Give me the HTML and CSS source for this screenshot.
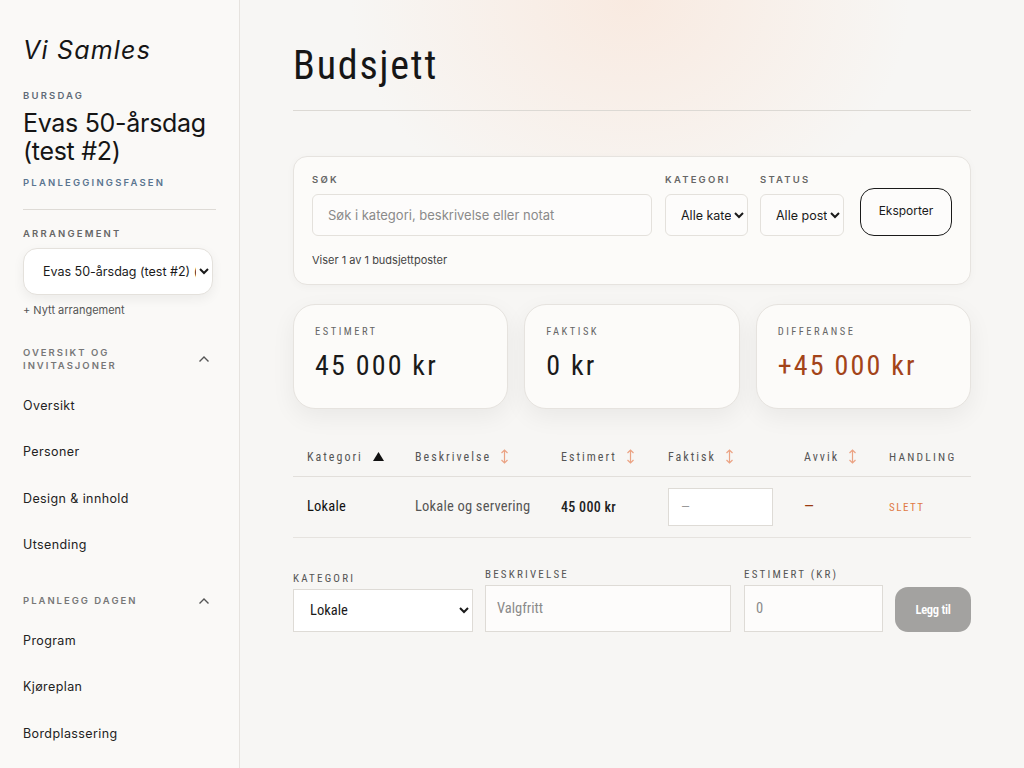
FILE: index.html
```html
<!DOCTYPE html>
<html lang="no">
<head>
<meta charset="utf-8">
<title>Budsjett – Vi Samles</title>
<link rel="stylesheet" href="styles.css">
</head>
<body>
<aside class="sidebar">
  <div class="brand">Vi Samles</div>
  <div class="event-type">BURSDAG</div>
  <div class="event-name">Evas 50-årsdag (test #2)</div>
  <div class="event-phase">PLANLEGGINGSFASEN</div>
  <div class="divider"></div>
  <div class="side-label">ARRANGEMENT</div>
  <select class="event-select"><option>Evas 50-årsdag (test #2) (bursdag)</option></select>
  <div class="new-event">+ Nytt arrangement</div>

  <div class="group-head">
    <span>OVERSIKT OG<br>INVITASJONER</span>
    <svg class="chev" width="12" height="8" viewBox="0 0 12 8"><path d="M1.5 6.5 6 2l4.5 4.5" fill="none" stroke="#555" stroke-width="1.4"/></svg>
  </div>
  <nav class="nav">
    <a>Oversikt</a>
    <a>Personer</a>
    <a>Design &amp; innhold</a>
    <a>Utsending</a>
  </nav>
  <div class="group-head group-two">
    <span>PLANLEGG DAGEN</span>
    <svg class="chev" width="12" height="8" viewBox="0 0 12 8"><path d="M1.5 6.5 6 2l4.5 4.5" fill="none" stroke="#555" stroke-width="1.4"/></svg>
  </div>
  <nav class="nav">
    <a>Program</a>
    <a>Kjøreplan</a>
    <a>Bordplassering</a>
  </nav>
</aside>

<main class="main">
  <h1 class="title">Budsjett</h1>
  <div class="rule"></div>

  <section class="filter-card">
    <div class="filter-row">
      <div class="field field-search">
        <label class="lbl">SØK</label>
        <input class="input" type="text" placeholder="Søk i kategori, beskrivelse eller notat">
      </div>
      <div class="field field-kat">
        <label class="lbl">KATEGORI</label>
        <select class="input sel"><option>Alle kategorier</option></select>
      </div>
      <div class="field field-status">
        <label class="lbl">STATUS</label>
        <select class="input sel"><option>Alle poster</option></select>
      </div>
      <button class="btn-export">Eksporter</button>
    </div>
    <div class="count">Viser 1 av 1 budsjettposter</div>
  </section>

  <section class="stats">
    <div class="stat">
      <div class="stat-label">ESTIMERT</div>
      <div class="stat-value">45 000 kr</div>
    </div>
    <div class="stat">
      <div class="stat-label">FAKTISK</div>
      <div class="stat-value">0 kr</div>
    </div>
    <div class="stat">
      <div class="stat-label">DIFFERANSE</div>
      <div class="stat-value diff">+45 000 kr</div>
    </div>
  </section>

  <table class="table">
    <colgroup>
      <col class="w1"><col class="w2"><col class="w3"><col class="w4"><col class="w5"><col class="w6">
    </colgroup>
    <thead>
      <tr>
        <th class="first">Kategori <svg class="sort-on" width="11" height="9" viewBox="0 0 11 9"><path d="M5.5 0 11 9H0z" fill="#111"/></svg></th>
        <th>Beskrivelse <svg class="sort" width="9" height="15" viewBox="0 0 9 15"><path d="M4.5 1v13M1.5 4 4.5 1l3 3M1.5 11l3 3 3-3" fill="none" stroke="#eba383" stroke-width="1.2"/></svg></th>
        <th>Estimert <svg class="sort" width="9" height="15" viewBox="0 0 9 15"><path d="M4.5 1v13M1.5 4 4.5 1l3 3M1.5 11l3 3 3-3" fill="none" stroke="#eba383" stroke-width="1.2"/></svg></th>
        <th>Faktisk <svg class="sort" width="9" height="15" viewBox="0 0 9 15"><path d="M4.5 1v13M1.5 4 4.5 1l3 3M1.5 11l3 3 3-3" fill="none" stroke="#eba383" stroke-width="1.2"/></svg></th>
        <th>Avvik <svg class="sort" width="9" height="15" viewBox="0 0 9 15"><path d="M4.5 1v13M1.5 4 4.5 1l3 3M1.5 11l3 3 3-3" fill="none" stroke="#eba383" stroke-width="1.2"/></svg></th>
        <th class="caps">HANDLING</th>
      </tr>
    </thead>
    <tbody>
      <tr>
        <td class="first strong">Lokale</td>
        <td class="muted">Lokale og servering</td>
        <td class="amount">45 000 kr</td>
        <td><input class="cell-input" type="text" placeholder="—"></td>
        <td class="dash">—</td>
        <td><span class="delete">SLETT</span></td>
      </tr>
    </tbody>
  </table>

  <section class="add-row">
    <div class="add-field add-kat">
      <label class="lbl lbl-c">KATEGORI</label>
      <select class="add-input add-sel"><option>Lokale</option></select>
    </div>
    <div class="add-field add-desc">
      <label class="lbl lbl-c">BESKRIVELSE</label>
      <input class="add-input" type="text" placeholder="Valgfritt">
    </div>
    <div class="add-field add-est">
      <label class="lbl lbl-c">ESTIMERT (KR)</label>
      <input class="add-input" type="text" placeholder="0">
    </div>
    <button class="btn-add">Legg til</button>
  </section>
</main>
</body>
</html>
```

FILE: styles.css
```css
* { box-sizing: border-box; }
html, body { margin: 0; height: 100%; }
body {
  display: flex;
  width: 1024px;
  height: 768px;
  overflow: hidden;
  font-family: "Inter", "Roboto", sans-serif;
  color: #1a1a1a;
  background-color: #f7f6f4;
  background-image: radial-gradient(ellipse 280px 230px at 630px 0px, rgba(250, 224, 208, 0.55), rgba(247, 246, 244, 0) 100%);
}

/* Sidebar */
.sidebar {
  width: 240px;
  flex: 0 0 240px;
  background: #faf9f7;
  border-right: 1px solid #e6e3df;
  padding: 34px 23px 0 23px;
  overflow: hidden;
}
.brand {
  font-style: italic;
  font-size: 25px;
  letter-spacing: 1.2px;
  color: #151515;
  line-height: 32px;
}
.event-type {
  margin-top: 24px;
  font-size: 9.5px;
  font-weight: 600;
  letter-spacing: 2.2px;
  color: #5f6b78;
  line-height: 12px;
}
.event-name {
  margin-top: 7px;
  font-size: 25px;
  line-height: 28px;
  color: #151515;
  letter-spacing: -0.3px;
}
.event-phase {
  margin-top: 12px;
  font-size: 9.5px;
  font-weight: 600;
  letter-spacing: 2.2px;
  color: #5a7590;
  line-height: 12px;
}
.divider {
  height: 1px;
  background: #dedbd6;
  margin-top: 20px;
  width: 193px;
}
.side-label {
  margin-top: 18px;
  font-size: 9.5px;
  font-weight: 600;
  letter-spacing: 2.2px;
  color: #666;
  line-height: 12px;
}
.event-select {
  display: block;
  margin-top: 8px;
  width: 190px;
  height: 47px;
  border: 1px solid #e4e1dc;
  border-radius: 14px;
  background: #fff;
  box-shadow: 0 4px 12px rgba(0,0,0,0.06);
  font-family: "Inter", "Roboto", sans-serif;
  font-size: 12.5px;
  padding: 0 0 0 15px;
  color: #1a1a1a;
}
.new-event {
  margin-top: 8px;
  font-size: 11px;
  color: #555;
  line-height: 14px;
}
.group-head {
  margin-top: 29px;
  display: flex;
  justify-content: space-between;
  align-items: center;
  font-size: 9.5px;
  font-weight: 600;
  letter-spacing: 2px;
  color: #777;
  line-height: 13px;
  padding-right: 6px;
}
.group-two { margin-top: 34px; }
.nav { display: block; margin-top: 18.5px; }
.nav a {
  display: block;
  font-size: 12.5px;
  letter-spacing: 0.4px;
  color: #222;
  line-height: 16px;
  padding: 7px 0;
  margin-bottom: 16.5px;
}
.nav a:last-child { margin-bottom: 0; }

/* Main */
.main {
  flex: 1;
  min-width: 0;
  padding: 41px 53px 0 53px;
}
.title {
  margin: 0;
  font-family: "Liberation Sans Narrow", "Roboto Condensed", "Roboto", sans-serif;
  font-weight: 400;
  font-size: 40px;
  letter-spacing: 1.8px;
  line-height: 50px;
  color: #161616;
}
.rule {
  margin-top: 19px;
  height: 1px;
  background: #dcd9d4;
}

.filter-card {
  margin-top: 45px;
  background: #fcfbf9;
  border: 1px solid #e6e3df;
  border-radius: 14px;
  padding: 17px 18px 17px 18px;
  box-shadow: 0 2px 8px rgba(0,0,0,0.03);
}
.filter-row {
  display: flex;
  align-items: flex-end;
  gap: 12px;
}
.field { display: flex; flex-direction: column; min-width: 0; }
.field-search { flex: 1; }
.field-kat { flex: 0 0 83px; margin-left: 1px; }
.field-status { flex: 0 0 84px; }
.lbl {
  font-size: 9.5px;
  font-weight: 600;
  letter-spacing: 2.2px;
  color: #666;
  line-height: 12px;
  margin-bottom: 8px;
}
.input {
  width: 100%;
  height: 42px;
  border: 1px solid #e4e1dc;
  border-radius: 6px;
  background: #fdfcfb;
  font-family: "Inter", "Roboto", sans-serif;
  font-size: 13px;
  padding: 0 15px;
  color: #1a1a1a;
}
.input::placeholder { color: #8a8a8a; }
.sel { padding: 0 0 0 11px; font-size: 12.5px; }
.btn-export {
  flex: 0 0 92px;
  margin-left: 4px;
  height: 48px;
  border: 1px solid #1a1a1a;
  border-radius: 14px;
  background: #fdfcfb;
  font-family: "Inter", "Roboto", sans-serif;
  font-size: 12px;
  color: #1a1a1a;
  padding-bottom: 5px;
}
.count {
  margin-top: 17px;
  font-size: 11px;
  color: #444;
  line-height: 14px;
}

.stats {
  margin-top: 19px;
  display: grid;
  grid-template-columns: 1fr 1fr 1fr;
  gap: 16px;
}
.stat {
  height: 105px;
  background: #fcfbf9;
  border: 1px solid #e6e3df;
  border-radius: 22px;
  padding: 21px 21px;
  box-shadow: 0 8px 24px rgba(0,0,0,0.06);
}
.stat-label {
  font-family: "Liberation Sans Narrow", "Roboto Condensed", "Roboto", sans-serif;
  font-size: 10.5px;
  letter-spacing: 2.5px;
  color: #666;
  line-height: 12px;
}
.stat-value {
  margin-top: 11px;
  font-family: "Liberation Sans Narrow", "Roboto Condensed", "Roboto", sans-serif;
  font-size: 28px;
  letter-spacing: 2.2px;
  line-height: 34px;
  color: #1a1a1a;
}
.stat-value.diff { color: #a3441a; }

.table {
  margin-top: 29px;
  width: 100%;
  table-layout: fixed;
  border-collapse: collapse;
  font-family: "Liberation Sans Narrow", "Roboto Condensed", "Roboto", sans-serif;
}
.w1 { width: 122px; }
.w2 { width: 146px; }
.w3 { width: 107px; }
.w4 { width: 136px; }
.w5 { width: 85px; }
.table th {
  text-align: left;
  font-weight: 400;
  font-size: 12px;
  letter-spacing: 2px;
  color: #555;
  height: 38px;
  padding: 0;
  border-bottom: 1px solid #e2dfdb;
  white-space: nowrap;
}
.table td {
  height: 61px;
  padding: 0;
  font-size: 14.5px;
  letter-spacing: 0.2px;
  border-bottom: 1px solid #e6e3df;
}
.table .first { padding-left: 14px; }
.table th.caps { letter-spacing: 2.2px; font-size: 11.5px; }
.sort { margin-left: 4px; vertical-align: -3px; }
.sort-on { margin-left: 5px; vertical-align: 0; }
.strong { color: #111; }
.muted { color: #555; }
.table td.amount { font-weight: 500; font-size: 14px; letter-spacing: 0.3px; color: #222; }
.cell-input {
  display: block;
  width: 105px;
  height: 38px;
  border: 1px solid #dedbd6;
  background: #fff;
  padding: 0 12px;
  font-family: inherit;
  font-size: 13px;
}
.cell-input::placeholder { color: #999; }
.table td.dash { color: #9a3a12; }
.delete { color: #e07a45; font-size: 11px; letter-spacing: 1.5px; }

.add-row {
  margin-top: 31px;
  display: flex;
  align-items: flex-end;
}
.add-field { display: flex; flex-direction: column; min-width: 0; }
.lbl-c {
  font-family: "Liberation Sans Narrow", "Roboto Condensed", "Roboto", sans-serif;
  font-weight: 400;
  font-size: 11px;
  color: #555;
  margin-bottom: 4px;
}
.add-kat { flex: 0 0 180px; }
.add-desc { flex: 0 0 246px; margin-left: 12px; }
.add-est { flex: 0 0 139px; margin-left: 13px; }
.add-input {
  width: 100%;
  height: 47px;
  border: 1px solid #dedbd6;
  background: #fdfcfb;
  padding: 0 11px;
  font-family: "Liberation Sans Narrow", "Roboto Condensed", "Roboto", sans-serif;
  font-size: 14.5px;
  color: #1a1a1a;
}
.add-input::placeholder { color: #8a8a8a; }
.add-sel { height: 43px; padding: 0 4px 0 12px; background: #fff; font-size: 14.5px; }
.btn-add {
  flex: 0 0 76px;
  margin-left: 12px;
  height: 45px;
  border: none;
  border-radius: 13px;
  background: #a3a2a0;
  color: #fff;
  font-family: "Liberation Sans Narrow", "Roboto Condensed", "Roboto", sans-serif;
  font-weight: 600;
  font-size: 12.5px;
  letter-spacing: -0.3px;
}
```
